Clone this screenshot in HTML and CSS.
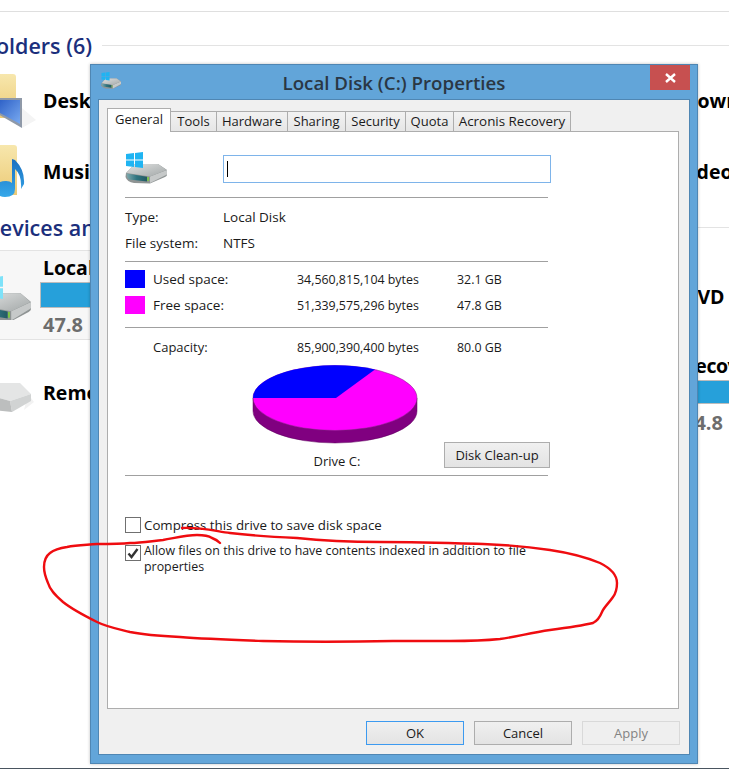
FILE: index.html
```html
<!DOCTYPE html>
<html lang="en">

<head>
    <meta charset="UTF-8" />
    <meta name="viewport" content="width=device-width, initial-scale=1.0" />
    <title>Local Disk (C:) Properties</title>
    <link rel="stylesheet" href="styles.css">
</head>

<body>
    <svg class="defs" width="0" height="0">
        <defs>
            <linearGradient id="diskTop" x1="0" y1="0" x2="1" y2="1">
                <stop offset="0" stop-color="#dfe1e1" />
                <stop offset="1" stop-color="#a3a8a8" />
            </linearGradient>
            <linearGradient id="diskBand" x1="0" y1="0" x2="1" y2="0">
                <stop offset="0" stop-color="#7fa9ad" />
                <stop offset="0.5" stop-color="#2f7480" />
                <stop offset="1" stop-color="#245a62" />
            </linearGradient>
            <linearGradient id="folder" x1="0" y1="0" x2="0" y2="1">
                <stop offset="0" stop-color="#f7e7ad" />
                <stop offset="1" stop-color="#ecca76" />
            </linearGradient>
            <linearGradient id="screen" x1="0" y1="0" x2="1" y2="1">
                <stop offset="0" stop-color="#2c5fc6" />
                <stop offset="1" stop-color="#79aaf0" />
            </linearGradient>
            <linearGradient id="note" x1="0" y1="0" x2="0" y2="1">
                <stop offset="0" stop-color="#1a6fc0" />
                <stop offset="1" stop-color="#36a8ea" />
            </linearGradient>
            <symbol id="hdd" viewBox="0 0 42 32" preserveAspectRatio="none">
                <path d="M1 21 L10 12 H33 L42 18 V23 Q42 24 40 25 L25 31.5 L9 31 Q2 30 0.5 25Z" fill="#8f9494" />
                <path d="M25 24.5 L42 18 V22.5 L25 31Z" fill="#c6c9c9" />
                <path d="M1.5 21 L10 12 H33 L41.5 18 L25 24.5Z" fill="url(#diskTop)" />
                <path d="M1.5 21.5 L22 24.7 V29.5 L4 27.5 Q2 26 1.5 21.5Z" fill="url(#diskBand)" />
                <rect x="22.3" y="25" width="1.6" height="4" fill="#7dc942" />
                <path class="logo" d="M1 2 L9 1 V7.5 H1Z M10 1 L18 0 V7.5 H10Z M1 8.5 H9 V15 L1 14Z M10 8.5 H18 V16 L10 15Z" />
            </symbol>
        </defs>
    </svg>

    <div class="explorer">
        <div class="group-head"><span class="group-title">Folders (6)</span><span class="group-line"></span></div>
        <div class="items">
            <div class="item">
                <svg class="item-icon" viewBox="0 0 43 70" width="43" height="70">
                    <path d="M22 62 L36 54 L22 42Z" fill="#f4f4f4" />
                    <path d="M-10 8 H13 Q16 8 16 11 V52 H-10Z" fill="url(#folder)" />
                    <path d="M-2 32 H22 V62 L-2 48Z" fill="#8f99a8" />
                    <path d="M-2 34 H20 V58 L-2 46Z" fill="url(#screen)" />
                </svg>
                <span class="item-name">Desktop</span>
            </div>
            <div class="item"><span class="item-name">Downloads</span></div>
            <div class="item">
                <svg class="item-icon" viewBox="0 0 43 70" width="43" height="70">
                    <path d="M-10 8 H14 Q17 8 17 11 V58 H-10Z" fill="url(#folder)" />
                    <path d="M12 22 L15 23 Q25 33 24 47 L21 52 Q22 38 15 32 V52 Q15 60 5 60 Q-4 60 -4 52 Q-4 44 6 44 Q10 44 12 46Z" fill="url(#note)" />
                </svg>
                <span class="item-name">Music</span>
            </div>
            <div class="item item-videos"><span class="item-name">Videos</span></div>
        </div>

        <div class="group-head group-devices"><span class="group-title">Devices and drives (4)</span><span class="group-line"></span></div>
        <div class="items">
            <div class="drive drive-selected">
                <svg class="drive-icon" viewBox="0 0 43 50" width="43" height="50">
                    <use href="#hdd" x="-18" y="6" width="49" height="46" />
                </svg>
                <div class="drive-info">
                    <span class="item-name">Local Disk (C:)</span>
                    <div class="bar"></div>
                    <span class="drive-free">47.8 GB free of 80.0 GB</span>
                </div>
            </div>
            <div class="drive drive-dvd"><span class="item-name">DVD RW Drive</span></div>
            <div class="drive drive-second">
                <svg class="drive-icon" viewBox="0 0 43 50" width="43" height="50">
                    <path d="M24 42 L34 34 L28 26Z" fill="#f2f2f2" />
                    <path d="M-12 27 L0 15 H20 L31 26 L10 33Z" fill="#e4e5e5" />
                    <path d="M10 33 L31 26 V33 L12 44Z" fill="#d1d3d3" />
                    <path d="M-12 27 L10 33 L12 44 L-8 42Z" fill="#bcbebe" />
                </svg>
                <span class="item-name">Removable Disk (D:)</span>
            </div>
            <div class="drive drive-second">
                <div class="drive-info">
                    <span class="item-name name-tight">Recovery (E:)</span>
                    <div class="bar bar-right"></div>
                    <span class="drive-free">84.8 GB free</span>
                </div>
            </div>
        </div>
    </div>

    <div class="window">
        <div class="titlebar">
            <svg class="title-icon" width="20" height="17"><use href="#hdd" width="20" height="17" /></svg>
            <span class="title-text">Local Disk (C:) Properties</span>
            <span class="close">
                <svg width="11" height="10" viewBox="0 0 11 10">
                    <path d="M1 1 L10 9 M10 1 L1 9" stroke="#fff" stroke-width="2.4" fill="none" />
                </svg>
            </span>
        </div>
        <div class="client">
            <div class="tabs">
                <div class="tab tab-active">General</div>
                <div class="tab tab-tools">Tools</div>
                <div class="tab tab-hardware">Hardware</div>
                <div class="tab tab-sharing">Sharing</div>
                <div class="tab tab-security">Security</div>
                <div class="tab tab-quota">Quota</div>
                <div class="tab tab-acronis">Acronis Recovery</div>
            </div>
            <div class="panel">
                <div class="name-row">
                    <svg width="42" height="32"><use href="#hdd" width="42" height="32" /></svg>
                    <div class="name-input"><span class="caret"></span></div>
                </div>
                <div class="sep sep-name"></div>

                <div class="info">
                    <div class="info-row"><span class="info-label">Type:</span><span>Local Disk</span></div>
                    <div class="info-row"><span class="info-label">File system:</span><span>NTFS</span></div>
                </div>
                <div class="sep"></div>

                <div class="space">
                    <div class="space-row">
                        <span class="swatch swatch-used"></span><span class="space-label">Used space:</span>
                        <span class="num">34,560,815,104 bytes</span><span class="num">32.1 GB</span>
                    </div>
                    <div class="space-row">
                        <span class="swatch swatch-free"></span><span class="space-label">Free space:</span>
                        <span class="num">51,339,575,296 bytes</span><span class="num">47.8 GB</span>
                    </div>
                </div>
                <div class="sep sep-space"></div>

                <div class="space-row capacity">
                    <span></span><span>Capacity:</span>
                    <span class="num">85,900,390,400 bytes</span><span class="num">80.0 GB</span>
                </div>

                <div class="chart-row">
                    <div class="chart">
                        <svg class="pie" viewBox="252 360 166 90" width="166" height="90">
                            <path d="M253 398 V411 A82 32 0 0 0 417 411 V398Z" fill="#800080" stroke="#5c005c" stroke-width="0.5" />
                            <ellipse cx="335" cy="398" rx="82" ry="32.5" fill="#ff00ff" stroke="#7a2a7a" stroke-width="0.5" />
                            <path d="M336 398 H253 A82 32.5 0 0 1 375 369.5Z" fill="#0000ff" />
                        </svg>
                        <div class="chart-label">Drive C:</div>
                    </div>
                    <button class="btn btn-clean">Disk Clean-up</button>
                </div>
                <div class="sep"></div>

                <div class="checks">
                    <div class="check-row">
                        <span class="box"></span>
                        <span class="check-short">Compress this drive to save disk space</span>
                    </div>
                    <div class="check-row check-second">
                        <span class="box">
                            <svg width="14" height="14" viewBox="0 0 14 14">
                                <path d="M2.5 7.5 L5.5 11 L11.5 3" stroke="#333" stroke-width="2.4" fill="none" />
                            </svg>
                        </span>
                        <span>Allow files on this drive to have contents indexed in addition to file properties</span>
                    </div>
                </div>
            </div>
            <div class="footer">
                <button class="btn btn-ok">OK</button>
                <button class="btn">Cancel</button>
                <button class="btn btn-disabled">Apply</button>
            </div>
        </div>
    </div>

    <svg class="scribble" width="729" height="769" viewBox="0 0 729 769">
        <path d="M182 528 C200 527 215 531 230 533 C255 536 275 537 297 538 C325 541 350 542 380 542 C420 542 450 543 483 544 C510 545 530 547 550 550 C570 553 588 558 600 563 C610 568 617 575 617 583 C617 590 616 593 613 597 C609 603 604 607 602 612 C600 617 597 621 593 623 C580 626 565 628 550 630 C530 633 515 637 500 639 C480 641 465 641 450 641 C430 641 410 641 393 641 C350 642 300 642 263 641 C235 640 205 639 180 637 C160 636 145 635 130 632 C118 629 107 627 97 622 C85 616 73 610 63 602 C55 595 50 590 48 583 C45 576 44 572 44 567 C44 561 46 556 50 553 C55 549 60 548 67 547 C77 545 87 545 97 544 C108 544 120 544 130 543 C142 543 152 541 163 540 C175 538 186 535 197 535 C204 535 209 536 212 538 C215 539 218 541 220 543" />
    </svg>
</body>

</html>
```

FILE: styles.css
```css
html,
body {
    margin: 0;
    padding: 0;
    background-color: #fff;
}

body {
    position: relative;
    width: 729px;
    height: 769px;
    overflow: hidden;
    font-family: "Open Sans", sans-serif;
}

.defs {
    display: block;
    height: 0;
}

.logo {
    fill: var(--logo, #1fb4f2);
}

/* explorer behind the dialog */
.explorer {
    margin-top: 11px;
    border-top: 1px solid #dfdfdf;
    height: 756px;
    border-bottom: 1px solid #4a5560;
}

.group-head {
    display: flex;
    align-items: center;
    height: 30px;
    margin: 18px 0 5px -15.5px;
}

.group-devices {
    margin: 5px 0 8px -16px;
}

.group-title {
    font-size: 21.5px;
    font-weight: 600;
    color: #1b2f7c;
    white-space: nowrap;
}

.group-line {
    flex: 1;
    height: 1px;
    margin-left: 10px;
    background-color: #e3e3e3;
}

.items {
    display: grid;
    grid-template-columns: 683px 1fr;
}

.item {
    display: flex;
    align-items: center;
    height: 71px;
}

.item-videos {
    margin-left: -5px;
}

.item-icon,
.drive-icon {
    flex: none;
    --logo: #7ee2f9;
}

.item-name {
    font-size: 19.5px;
    font-weight: 700;
    line-height: 24px;
    color: #000;
    white-space: nowrap;
}

.name-tight {
    letter-spacing: -0.5px;
}

.drive {
    display: flex;
    align-items: center;
    height: 90px;
    box-sizing: border-box;
}

.drive-selected {
    background-color: #f7f7f7;
    border-top: 1px solid #e3e3e3;
    border-bottom: 1px solid #e3e3e3;
}

.drive-dvd {
    padding-top: 4px;
}

.drive-second {
    margin-top: 8px;
}

.drive-info {
    width: 500px;
    padding-top: 4px;
}

.bar {
    height: 26px;
    margin: 2px 0 4px -3px;
    background-color: #26a0da;
    border: 1px solid #bcbcbc;
    box-sizing: border-box;
}

.bar-right {
    height: 24px;
    margin-bottom: 6px;
}

.drive-free {
    font-size: 20px;
    font-weight: 700;
    line-height: 26px;
    word-spacing: 3px;
    color: #6d6d6d;
    white-space: nowrap;
}

/* the properties dialog */
.window {
    position: absolute;
    left: 90px;
    top: 64px;
    width: 608px;
    height: 700px;
    box-sizing: border-box;
    background-color: #62a5d9;
    border: 1px solid #4f86b3;
    box-shadow: 0 0 3px rgba(0, 0, 0, 0.25);
    padding: 0 7px 8px;
    display: flex;
    flex-direction: column;
}

.titlebar {
    display: flex;
    align-items: flex-start;
    justify-content: center;
    position: relative;
    height: 34px;
    flex: none;
}

.title-icon {
    position: absolute;
    left: 3px;
    top: 7px;
}

.title-text {
    margin-top: 5px;
    font-size: 18.7px;
    font-weight: 600;
    line-height: 26px;
    color: #2a3744;
}

.close {
    position: absolute;
    right: 0;
    top: 0;
    width: 40px;
    height: 25px;
    background-color: #c75050;
    display: flex;
    align-items: center;
    justify-content: center;
}

.client {
    flex: 1;
    background-color: #f0f0f0;
    border: 1px solid #4f86b3;
    padding: 8px 10px 0 8px;
    font-size: 13px;
    color: #1a1a1a;
}

.tabs {
    display: flex;
    align-items: flex-end;
    height: 23px;
    position: relative;
    z-index: 1;
}

.tab {
    box-sizing: border-box;
    height: 20px;
    line-height: 18px;
    text-align: center;
    background: linear-gradient(#f2f2f2, #e6e6e6);
    border: 1px solid #adadad;
    border-left-width: 0;
    border-bottom-width: 0;
    white-space: nowrap;
}

.tab-active {
    width: 64px;
    height: 24px;
    margin-bottom: -1px;
    line-height: 21px;
    background: #fff;
    border-left-width: 1px;
}

.tab-tools { width: 46px; }
.tab-hardware { width: 71px; }
.tab-sharing { width: 58px; }
.tab-security { width: 60px; }
.tab-quota { width: 48px; }
.tab-acronis { width: 117px; font-size: 13.4px; }

.panel {
    box-sizing: border-box;
    width: 572px;
    height: 578px;
    padding: 20px 0 0 17px;
    background-color: #fff;
    border: 1px solid #adadad;
}

.name-row {
    display: grid;
    grid-template-columns: 98px 328px;
    height: 31px;
}

.name-input {
    box-sizing: border-box;
    height: 28px;
    margin-top: 3px;
    padding: 5px 0 0 3px;
    border: 1px solid #7eb4ea;
}

.caret {
    display: block;
    width: 1px;
    height: 16px;
    background-color: #000;
}

.sep {
    width: 423px;
    height: 1px;
    background-color: #a0a0a0;
}

.sep-name {
    margin-top: 14px;
}

.info {
    margin: 6px 0 5px;
    font-size: 13.5px;
}

.info-row {
    display: grid;
    grid-template-columns: 98px 1fr;
    align-items: center;
    height: 26px;
}

.space {
    margin: 4px 0 9px;
}

.space-row {
    display: grid;
    grid-template-columns: 28px 144px 160px 1fr;
    align-items: center;
    height: 26px;
}

.space-label {
    font-size: 13.5px;
}

.num {
    font-size: 12.4px;
}

.swatch {
    display: block;
    width: 20px;
    height: 18px;
}

.swatch-used {
    background-color: #0000ff;
}

.swatch-free {
    background-color: #ff00ff;
}

.capacity {
    margin-top: 6px;
}

.chart-row {
    display: flex;
    align-items: flex-end;
    height: 110px;
    margin-bottom: 5px;
}

.chart {
    width: 319px;
}

.pie {
    display: block;
    margin-left: 127px;
}

.chart-label {
    width: 168px;
    height: 20px;
    margin-left: 128px;
    line-height: 23px;
    text-align: center;
}

.btn {
    box-sizing: border-box;
    width: 98px;
    height: 24px;
    padding: 0;
    font-family: inherit;
    font-size: 13px;
    color: #1a1a1a;
    background: linear-gradient(#f0f0f0, #e3e3e3);
    border: 1px solid #adadad;
}

.btn-clean {
    width: 106px;
    height: 26px;
    margin-bottom: 2px;
}

.btn-ok {
    border-color: #3c9af0;
}

.btn-disabled {
    background: #efefef;
    border-color: #d9d9d9;
    color: #838383;
}

.checks {
    margin-top: 41px;
    font-size: 12.4px;
}

.check-row {
    display: flex;
    align-items: flex-start;
    gap: 3px;
    width: 410px;
    line-height: 16px;
}

.check-short {
    font-size: 13.3px;
}

.check-second {
    margin-top: 10px;
}

.check-second .box {
    margin-top: 2px;
}

.box {
    flex: none;
    display: block;
    box-sizing: border-box;
    width: 16px;
    height: 16px;
    background-color: #fff;
    border: 1px solid #707070;
}

.box svg {
    display: block;
}

.footer {
    display: flex;
    justify-content: flex-end;
    gap: 10px;
    width: 573px;
    margin-top: 12px;
}

/* the red hand drawn ring */
.scribble {
    position: absolute;
    left: 0;
    top: 0;
    pointer-events: none;
}

.scribble path {
    fill: none;
    stroke: #ef0c10;
    stroke-width: 2.4;
    stroke-linecap: round;
}
```
